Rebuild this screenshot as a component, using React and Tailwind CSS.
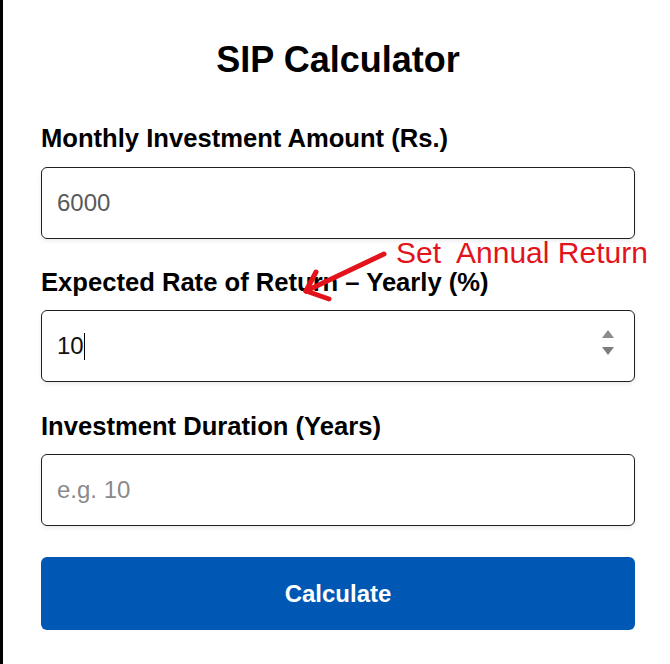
import React, { useState } from "react";

export default function App() {
  const [amount, setAmount] = useState("6000");
  const [rate, setRate] = useState("10");
  const [years, setYears] = useState("");

  return (
    <div className="relative h-[664px] overflow-hidden bg-white border-l-[3px] border-black font-['Liberation_Sans',Arial,sans-serif]">
      <div className="pl-[38px] pr-[35px] pt-[39px]">
        <h1 className="text-center text-[36px] leading-[42px] font-bold text-black">
          SIP Calculator
        </h1>

        <form className="mt-[42px]" onSubmit={(e) => e.preventDefault()}>
          <label className="block text-[25.6px] leading-[30px] font-bold text-black mb-[14px]">
            Monthly Investment Amount (Rs.)
          </label>
          <input
            type="text"
            value={amount}
            onChange={(e) => setAmount(e.target.value)}
            className="block w-full h-[72px] px-[15px] text-[24px] text-[#5a5a5a] border border-[#1f1f1f] rounded-[6px] shadow-[0_2px_4px_rgba(0,0,0,0.08)] outline-none"
          />

          <label className="block mt-[28px] text-[25.6px] leading-[30px] font-bold text-black mb-[13px]">
            Expected Rate of Return – Yearly (%)
          </label>
          <div className="relative">
            <input
              type="text"
              value={rate}
              onChange={(e) => setRate(e.target.value)}
              className="block w-full h-[72px] px-[15px] text-[24px] text-[#111] border border-[#1f1f1f] rounded-[6px] shadow-[0_2px_4px_rgba(0,0,0,0.08)] outline-none"
            />
            <span className="absolute left-[43px] top-[23px] w-[1px] h-[27px] bg-black" />
            <div className="absolute right-[21px] top-[20px] flex flex-col gap-[9px]">
              <svg width="12" height="8" viewBox="0 0 12 8">
                <path d="M6 0 L12 8 L0 8 Z" fill="#8c8c8c" />
              </svg>
              <svg width="12" height="8" viewBox="0 0 12 8">
                <path d="M0 0 L12 0 L6 8 Z" fill="#7d7d7d" />
              </svg>
            </div>
          </div>

          <label className="block mt-[29px] text-[25.6px] leading-[30px] font-bold text-black mb-[13px]">
            Investment Duration (Years)
          </label>
          <input
            type="text"
            value={years}
            placeholder="e.g. 10"
            onChange={(e) => setYears(e.target.value)}
            className="block w-full h-[72px] px-[15px] text-[24px] text-[#111] placeholder:text-[#8a8a8a] border border-[#1f1f1f] rounded-[6px] shadow-[0_2px_4px_rgba(0,0,0,0.08)] outline-none"
          />

          <button
            type="submit"
            className="block w-full mt-[31px] h-[73px] bg-[#0057b4] rounded-[6px] text-white text-[24px] font-bold"
          >
            Calculate
          </button>
        </form>
      </div>

      {/* annotation overlay */}
      <div className="absolute left-[393px] top-[236px] text-[30px] leading-[34px] text-[#e3131b] whitespace-pre">
        Set  Annual Return
      </div>
      <svg className="absolute left-0 top-0 pointer-events-none" width="670" height="664">
        <g stroke="#e3131b" strokeWidth="5" strokeLinecap="round" fill="none">
          <path d="M381 254 L303 291" />
          <path d="M303 291 L313 272" />
          <path d="M303 291 L326 299" />
        </g>
      </svg>
    </div>
  );
}
